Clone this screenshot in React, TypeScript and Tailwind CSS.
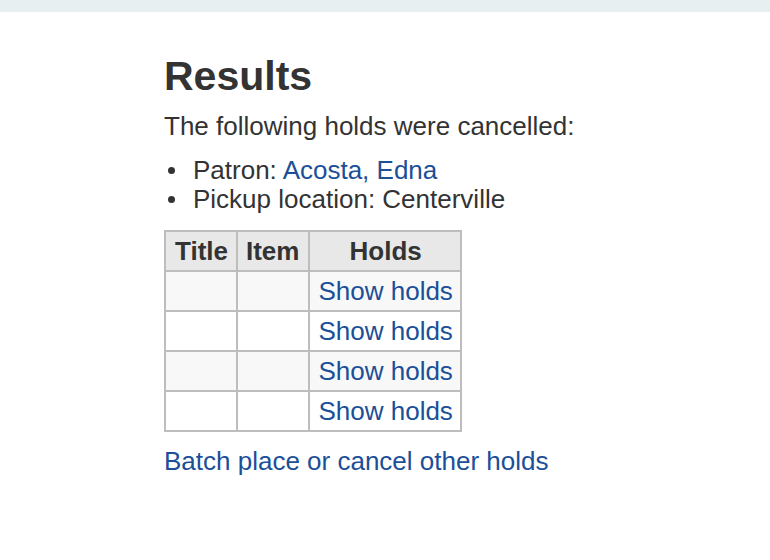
import React from "react";

export default function App() {
  const rows = [0, 1, 2, 3];
  return (
    <div
      className="min-h-[560px] w-[770px] bg-white text-[#333333]"
      style={{ fontFamily: '"Liberation Sans", Arial, sans-serif' }}
    >
      <div className="h-[12px] w-full bg-[#e7eff1]" />
      <div className="pl-[164px] pt-[40px]">
        <h1 className="text-[41px] font-bold leading-[48px]">Results</h1>
        <p className="mt-[11px] text-[26px] leading-[30px]">The following holds were cancelled:</p>
        <ul className="mt-[15px] text-[26px] leading-[29px]">
          <li className="flex items-center">
            <span className="flex w-[29px] shrink-0 items-center">
              <span className="ml-[4px] block h-[7px] w-[7px] rounded-full bg-[#333333]" />
            </span>
            <span>
              Patron: <a className="text-[#1b4f98]">Acosta, Edna</a>
            </span>
          </li>
          <li className="flex items-center">
            <span className="flex w-[29px] shrink-0 items-center">
              <span className="ml-[4px] block h-[7px] w-[7px] rounded-full bg-[#333333]" />
            </span>
            <span>Pickup location: Centerville</span>
          </li>
        </ul>
        <table className="mt-[16px] border-collapse border-2 border-[#bdbdbd] text-[26px] leading-[30px]">
          <thead>
            <tr className="bg-[#e8e8e8]">
              <th className="border-2 border-[#bdbdbd] py-[4px] pl-[9px] pr-[8px] font-bold">Title</th>
              <th className="border-2 border-[#bdbdbd] py-[4px] pl-[8px] pr-[9px] font-bold">Item</th>
              <th className="border-2 border-[#bdbdbd] py-[4px] pl-[8px] pr-[7px] font-bold">Holds</th>
            </tr>
          </thead>
          <tbody>
            {rows.map((r) => (
              <tr key={r} className={r % 2 === 0 ? "bg-[#f8f8f8]" : "bg-white"}>
                <td className="border-2 border-[#bdbdbd] py-[4px]"></td>
                <td className="border-2 border-[#bdbdbd] py-[4px]"></td>
                <td className="border-2 border-[#bdbdbd] py-[4px] pl-[8px] pr-[7px] text-[#1b4f98]">
                  Show holds
                </td>
              </tr>
            ))}
          </tbody>
        </table>
        <a className="mt-[14px] block text-[26px] leading-[30px] text-[#1b4f98]">
          Batch place or cancel other holds
        </a>
      </div>
    </div>
  );
}
